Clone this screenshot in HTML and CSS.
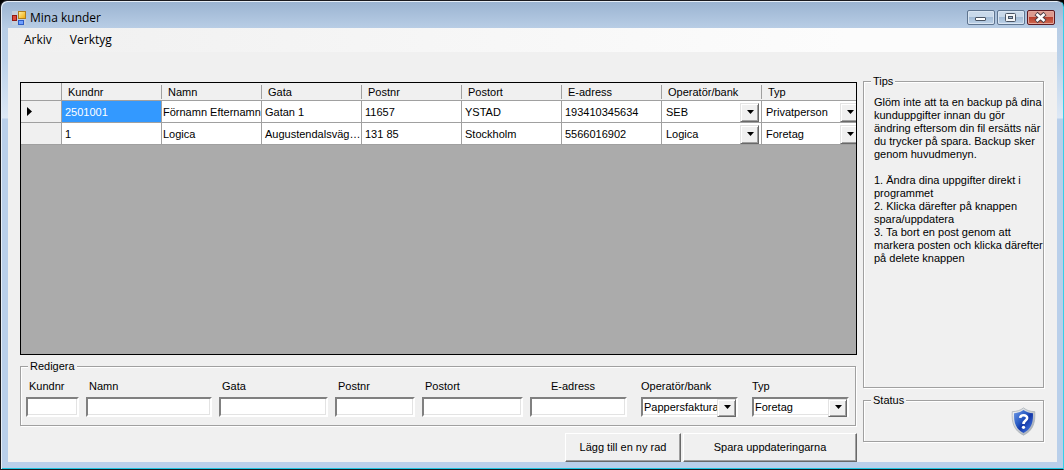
FILE: index.html
```html
<!DOCTYPE html>
<html lang="sv">
<head>
<meta charset="utf-8">
<title>Mina kunder</title>
<link rel="stylesheet" href="styles.css">
</head>
<body>
<div class="window">
  <header class="titlebar">
    <svg class="app-icon" viewBox="0 0 14 14" aria-hidden="true">
      <defs>
        <linearGradient id="gold" x1="0" y1="0" x2="1" y2="1"><stop offset="0" stop-color="#fff3a8"/><stop offset="1" stop-color="#f0a800"/></linearGradient>
      </defs>
      <rect x="0" y="0" width="14" height="14" fill="#c3cedb"/>
      <rect x="6.5" y="0.5" width="7" height="7" fill="url(#gold)" stroke="#b07c1c"/>
      <rect x="0.5" y="4.500" width="4" height="5" fill="#dc4a3a" stroke="#931a14"/>
      <rect x="6.500" y="9.500" width="5" height="4" fill="#6fa0ff" stroke="#2d5cc4"/>
    </svg>
    <h1 class="title">Mina kunder</h1>
    <div class="caption-buttons">
      <button class="caption" type="button" aria-label="Minimera"><svg viewBox="1 1 26 13"><rect x="8.500" y="7.500" width="10" height="3" rx="0.500" fill="#fff" stroke="#4a5564"/></svg></button>
      <button class="caption" type="button" aria-label="Maximera"><svg viewBox="1 1 26 13"><rect x="8.500" y="3.500" width="10" height="8" rx="1" fill="#f4f6f8" stroke="#4a5564"/><rect x="11.500" y="6.500" width="4" height="2" fill="#9fb6d0" stroke="#4a5564"/></svg></button>
      <button class="caption caption-close" type="button" aria-label="Stäng"><svg viewBox="1 1 26 13"><path d="M9 3.500L18 11.500M18 3.500L9 11.500" stroke="#4c3c44" stroke-width="4.500"/><path d="M9.500 4L17.500 11M17.500 4L9.500 11" stroke="#fff" stroke-width="2.600"/></svg></button>
    </div>
  </header>
  <div class="client">
    <nav class="menu">
      <button class="menu-item" type="button">Arkiv</button>
      <button class="menu-item" type="button">Verktyg</button>
    </nav>
    <div class="main">
      <div class="left">
        <div class="datagrid">
          <table class="customers">
            <colgroup><col class="col-head"><col><col><col><col><col><col><col><col></colgroup>
            <thead>
              <tr><th class="corner"></th><th><span>Kundnr</span></th><th><span>Namn</span></th><th><span>Gata</span></th><th><span>Postnr</span></th><th><span>Postort</span></th><th><span>E-adress</span></th><th><span>Operatör/bank</span></th><th><span>Typ</span></th></tr>
            </thead>
            <tbody>
              <tr>
                <th class="rowhead" scope="row"><svg class="marker" viewBox="0 0 5 9" aria-label="Aktuell rad"><path d="M0 0L5 4.500L0 9Z"/></svg></th>
                <td class="selected">2501001</td><td class="name">Förnamn Efternamn</td><td>Gatan 1</td><td>11657</td><td>YSTAD</td><td>193410345634</td>
                <td class="choice"><span class="combo"><select aria-label="Operatör/bank"><option>SEB</option><option>Logica</option></select></span></td>
                <td class="choice"><span class="combo"><select aria-label="Typ"><option>Privatperson</option><option>Foretag</option></select></span></td>
              </tr>
              <tr>
                <th class="rowhead" scope="row"></th>
                <td>1</td><td class="name">Logica</td><td>Augustendalsvägen</td><td>131 85</td><td>Stockholm</td><td>5566016902</td>
                <td class="choice"><span class="combo"><select aria-label="Operatör/bank"><option>Logica</option><option>SEB</option></select></span></td>
                <td class="choice"><span class="combo"><select aria-label="Typ"><option>Foretag</option><option>Privatperson</option></select></span></td>
              </tr>
            </tbody>
          </table>
        </div>
        <fieldset class="group edit">
          <legend>Redigera</legend>
          <div class="fields">
            <div class="field"><label for="kundnr">Kundnr</label><input id="kundnr" type="text"></div>
            <div class="field"><label for="namn">Namn</label><input id="namn" type="text"></div>
            <div class="field"><label for="gata">Gata</label><input id="gata" type="text"></div>
            <div class="field"><label for="postnr">Postnr</label><input id="postnr" type="text"></div>
            <div class="field"><label for="postort">Postort</label><input id="postort" type="text"></div>
            <div class="field field-wide field-mail"><label for="epost">E-adress</label><input id="epost" type="text"></div>
            <div class="field field-wide field-choice"><label for="bank">Operatör/bank</label><span class="combo combo-box"><select id="bank"><option>Pappersfaktura</option><option>SEB</option><option>Logica</option></select></span></div>
            <div class="field field-choice"><label for="typ">Typ</label><span class="combo combo-box"><select id="typ"><option>Foretag</option><option>Privatperson</option></select></span></div>
          </div>
        </fieldset>
        <div class="actions">
          <button class="button" type="button">Lägg till en ny rad</button>
          <button class="button button-save" type="button">Spara uppdateringarna</button>
        </div>
      </div>
      <aside class="right">
        <fieldset class="group tips">
          <legend>Tips</legend>
          <p>Glöm inte att ta en backup på dina<br>kunduppgifter innan du gör<br>ändring eftersom din fil ersätts när<br>du trycker på spara. Backup sker<br>genom huvudmenyn.</p>
          <p>1. Ändra dina uppgifter direkt i<br>programmet<br>2. Klicka därefter på knappen<br>spara/uppdatera<br>3. Ta bort en post genom att<br>markera posten och klicka därefter<br>på delete knappen</p>
        </fieldset>
        <fieldset class="group status">
          <legend>Status</legend>
          <svg class="shield" viewBox="0 0 26 30" role="img" aria-label="Hjälp">
            <defs>
              <linearGradient id="blue" x1="0" y1="0" x2="1" y2="1"><stop offset="0" stop-color="#6d98e6"/><stop offset="0.400" stop-color="#2a5cc4"/><stop offset="0.550" stop-color="#1438a8"/><stop offset="1" stop-color="#4f86f0"/></linearGradient>
              <linearGradient id="rim" x1="0" y1="0" x2="1" y2="1"><stop offset="0" stop-color="#f4f6f8"/><stop offset="1" stop-color="#9aa2ac"/></linearGradient>
            </defs>
            <path d="M13 0.800C10 3.500 5.500 4.800 1.300 4.700C0.500 16 3 24.500 13 29.200C23 24.500 25.500 16 24.700 4.700C20.500 4.800 16 3.500 13 0.800Z" fill="url(#rim)" stroke="#a9b0b8" stroke-width="0.800"/>
            <path d="M13 3C10.500 5 6.800 6.200 3.200 6.300C2.700 16 5 22.800 13 27C21 22.800 23.300 16 22.800 6.300C19.200 6.200 15.500 5 13 3Z" fill="url(#blue)"/>
            <path d="M9.500 11.300C9.800 7.800 16.800 7.500 16.800 11.400C16.800 14.200 13 14 13 17.600" fill="none" stroke="#fff" stroke-width="2.700"/>
            <circle cx="13" cy="21" r="1.700" fill="#fff"/>
          </svg>
        </fieldset>
      </aside>
    </div>
  </div>
</div>
</body>
</html>
```
FILE: styles.css
```css
* { box-sizing: border-box; }

body {
  margin: 0;
  background: #000;
  color: #000;
  font: 11px/13px "Liberation Sans", Arial, sans-serif;
}

button, input, select {
  margin: 0;
  border-radius: 0;
  font: inherit;
  color: inherit;
}

/* Window frame */
.window {
  display: flex;
  flex-direction: column;
  height: 100vh;
  padding: 0 6px 7px;
  border: 1px solid #1a1a1f;
  border-right-color: #35cfe8;
  border-radius: 7px 7px 0 0;
  background: linear-gradient(#9ab3d1, #b8cde5 27px, #bcd2ea 60px, #dde8f5 117px, #b9cfea 118px);
  box-shadow: inset 1px 1px #e6eef7, inset 0 -1px #1cc4e0;
}

.titlebar {
  display: flex;
  align-items: center;
  flex: none;
  height: 27px;
  padding: 7px 2px 0 5px;
}

.app-icon { width: 14px; height: 14px; }

.title {
  flex: 1;
  margin: 0 0 0 4px;
  font: 12px/16px "Open Sans", "Noto Sans", sans-serif;
}

.caption-buttons {
  display: flex;
  align-self: flex-start;
  gap: 2px;
  padding-top: 2px;
}

.caption {
  width: 28px;
  height: 15px;
  padding: 0;
  border: 1px solid #5e748f;
  border-radius: 2px;
  background: linear-gradient(#c9d9ea 45%, #a3bcd7 50%, #bdd2e8);
  box-shadow: inset 0 0 0 1px #d9e5f2;
}

.caption svg { display: block; width: 26px; height: 13px; }

.caption-close {
  border-color: #5d1a22;
  background: linear-gradient(#dc9a8e 45%, #b9402e 50%, #cf6a52);
  box-shadow: inset 0 0 0 1px #e3a79d;
}

/* Client area */
.client {
  display: flex;
  flex: 1;
  flex-direction: column;
  min-height: 0;
  margin: 0 0 0 1px;
  background: #f0f0f0;
}

.menu {
  display: flex;
  flex: none;
  height: 24px;
  padding-left: 10px;
  background: linear-gradient(90deg, #f0f0f0, #fcfcfc 80%);
}

.menu-item {
  padding: 0 6px;
  border: 0;
  background: none;
  font: 12px/24px "Open Sans", "Noto Sans", sans-serif;
}

.menu-item + .menu-item { margin-left: 6px; }

.main {
  display: flex;
  flex: 1;
  gap: 6px;
  min-height: 0;
  padding: 23px 13px 0 12px;
}

.left {
  display: flex;
  flex: 1;
  flex-direction: column;
  min-width: 0;
  padding-top: 7px;
}

.right {
  display: flex;
  flex: none;
  flex-direction: column;
  gap: 6px;
  width: 181px;
  padding-bottom: 20px;
}

/* Customer table */
.datagrid {
  flex: 1;
  min-height: 0;
  overflow: hidden;
  border: 1px solid #000;
  background: #ababab;
}

.customers {
  width: 841px;
  min-width: 100%;
  border-collapse: separate;
  border-spacing: 0;
  table-layout: fixed;
}

.col-head { width: 41px; }

.customers th, .customers td {
  height: 22px;
  padding: 2px 0 0 3px;
  overflow: hidden;
  border: 0 solid #a0a0a0;
  border-width: 0 1px 1px 0;
  background: #fff;
  font-weight: normal;
  text-align: left;
  text-overflow: ellipsis;
  white-space: nowrap;
}

.customers thead th {
  height: 18px;
  padding: 2px 0 1px;
  border-right: 0;
  background: #f0f0f0;
}

.customers thead span {
  display: block;
  padding: 1px 0 0 6px;
  border-right: 1px solid #a0a0a0;
  line-height: 13px;
}

.customers thead .corner { border-right: 1px solid #a0a0a0; }

.customers .rowhead { padding: 0 6px; background: #f0f0f0; }

.marker { display: block; width: 5px; height: 9px; }

.customers .selected { background: #39f; color: #fff; }

.customers .name { padding-left: 1px; text-overflow: clip; }

.customers .choice { padding: 0 2px 0 0; }

/* Drop-downs */
.combo { position: relative; display: block; }

.combo select {
  display: block;
  width: 100%;
  height: 19px;
  padding: 1px 18px 0 4px;
  border: 0;
  appearance: none;
  background: #fff;
}

.combo::before {
  content: "";
  position: absolute;
  top: 1px;
  right: 0;
  width: 17px;
  height: 17px;
  border: 1px solid;
  border-color: #e3e3e3 #696969 #696969 #e3e3e3;
  background: #f0f0f0;
  box-shadow: inset 1px 1px #fff, inset -1px -1px #a0a0a0;
  pointer-events: none;
}

.combo::after {
  content: "";
  position: absolute;
  top: 8px;
  right: 5px;
  width: 7px;
  height: 4px;
  background: #000;
  clip-path: polygon(0 0, 100% 0, 50% 100%);
  pointer-events: none;
}

.combo-box select, .field input {
  width: 100%;
  height: 20px;
  border: 2px solid;
  border-color: #808080 #fff #fff #808080;
  background: #fff;
  box-shadow: inset -1px -1px #e3e3e3;
}

.combo-box select { padding: 0 16px 0 1px; }
.combo-box::before { top: 2px; right: 2px; height: 16px; }
.combo-box::after { right: 7px; }

/* Group boxes */
.group {
  min-width: 0;
  margin: 0;
  border: 1px solid #a0a0a0;
  box-shadow: 1px 1px #fff, inset 1px 1px #fff;
}

.group legend {
  padding: 0 2px;
  background: #f0f0f0;
}

.edit { margin: 5px 1px 0 0; padding: 7px 6px 8px 5px; }
.edit legend { margin-left: 2px; }

.fields {
  display: grid;
  grid-template-columns: 53fr 126fr 109fr 80fr 101fr 104fr 104fr 97fr;
  gap: 7px;
}

.field {
  display: flex;
  flex-direction: column;
  gap: 4px;
  min-width: 0;
}

.field label { padding-left: 3px; white-space: nowrap; }
.field-wide { padding-right: 7px; }
.field-mail label { padding-left: 21px; }
.field-choice label { padding-left: 0; }

.tips { flex: 1; padding: 8px 4px 0 10px; }
.tips legend, .status legend { margin-left: -3px; }
.tips p { margin: 0 0 13px; white-space: nowrap; }

.status {
  display: flex;
  justify-content: flex-end;
  padding: 0 7px 5px 10px;
}

.shield { display: block; width: 25px; height: 29px; }

/* Buttons */
.actions {
  display: flex;
  justify-content: flex-end;
  gap: 2px;
  margin-top: 7px;
}

.button {
  width: 116px;
  height: 29px;
  padding: 0;
  border: 1px solid;
  border-color: #fff #696969 #696969 #fff;
  background: #f0f0f0;
  box-shadow: inset -1px -1px #a0a0a0;
}

.button-save { width: 174px; }
```
